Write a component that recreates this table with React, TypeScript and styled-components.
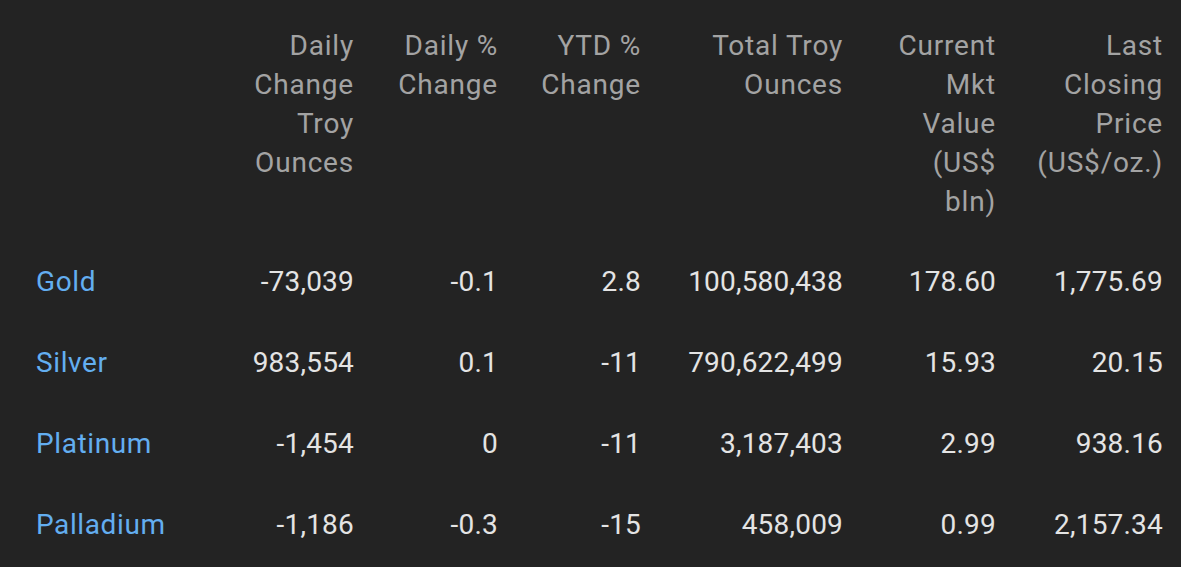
import React from "react";
import styled, { createGlobalStyle } from "styled-components";

const Global = createGlobalStyle`
  html, body {
    margin: 0;
    padding: 0;
    background: #232323;
  }
  body {
    font-family: Roboto, "Noto Sans", "Liberation Sans", sans-serif;
  }
`;

const Page = styled.div`
  background: #232323;
  min-height: 567px;
  padding: 26px 18px 0 36px;
  box-sizing: border-box;
`;

const Table = styled.div`
  display: grid;
  grid-template-columns: 170px 148px 144px 143px 202px 153px 167px;
  font-size: 28px;
  line-height: 39px;
`;

const HeadCell = styled.div`
  color: #a3a3a3;
  text-align: right;
  padding-bottom: 20px;
  padding-left: 36px;
  letter-spacing: 0.8px;
`;

const Cell = styled.div<{ $name?: boolean }>`
  color: ${(p) => (p.$name ? "#63aef0" : "#e4e4e4")};
  text-align: ${(p) => (p.$name ? "left" : "right")};
  padding: 21px 0;
  white-space: nowrap;
  letter-spacing: ${(p) => (p.$name ? "0.6px" : "0.2px")};
`;

const headers = [
  "",
  "Daily Change Troy Ounces",
  "Daily % Change",
  "YTD % Change",
  "Total Troy Ounces",
  "Current Mkt Value (US$ bln)",
  "Last Closing Price (US$/oz.)",
];

const rows = [
  ["Gold", "-73,039", "-0.1", "2.8", "100,580,438", "178.60", "1,775.69"],
  ["Silver", "983,554", "0.1", "-11", "790,622,499", "15.93", "20.15"],
  ["Platinum", "-1,454", "0", "-11", "3,187,403", "2.99", "938.16"],
  ["Palladium", "-1,186", "-0.3", "-15", "458,009", "0.99", "2,157.34"],
];

export default function App() {
  return (
    <>
      <Global />
      <Page>
        <Table>
          {headers.map((h, i) => (
            <HeadCell key={`h${i}`}>{h}</HeadCell>
          ))}
          {rows.map((r) =>
            r.map((v, i) => (
              <Cell key={`${r[0]}-${i}`} $name={i === 0}>
                {v}
              </Cell>
            ))
          )}
        </Table>
      </Page>
    </>
  );
}
